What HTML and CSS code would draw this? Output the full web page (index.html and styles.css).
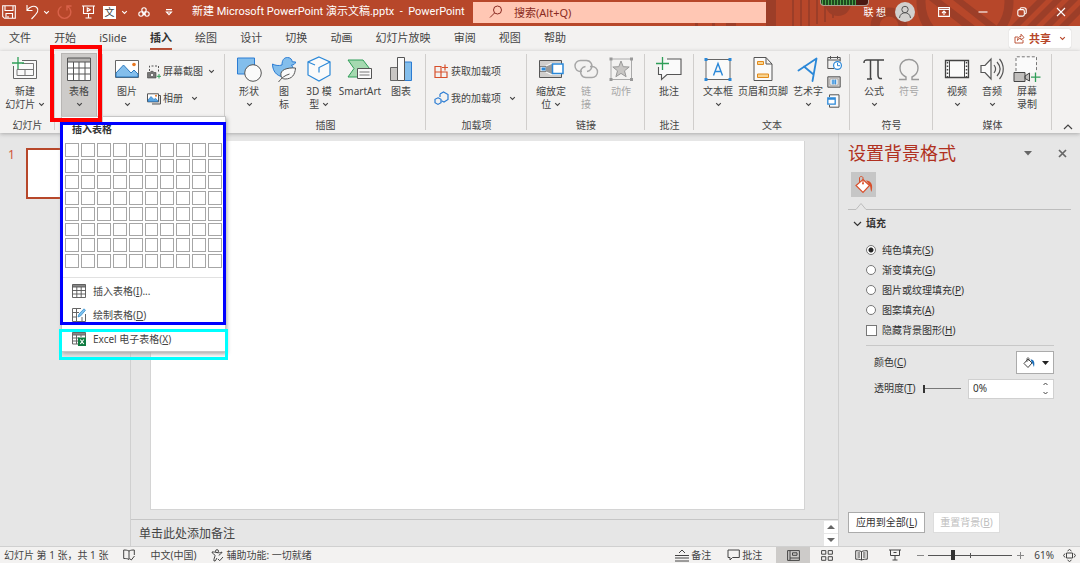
FILE: index.html
```html
<!DOCTYPE html>
<html lang="zh-CN">
<head>
<meta charset="utf-8">
<title>新建 Microsoft PowerPoint 演示文稿.pptx - PowerPoint</title>
<link rel="stylesheet" href="styles.css">
</head>
<body>
<svg class="defs" aria-hidden="true">
  <symbol id="chev" viewBox="0 0 7 5"><path d="M1.200 1.200 3.500 3.500 5.800 1.200" fill="none" stroke="currentColor" stroke-width="1.100"/></symbol>
</svg>

<header class="titlebar">
  <svg class="decor" viewBox="0 0 385 26" aria-hidden="true">
    <g fill="#9c3e28">
      <path d="M0 22h3v4H0zM17 22h3v4h-3zM31 23h10v3H31zM71 0h10v26H71zM97 0h2v26h-2zM105 0h2v26h-2zM113 0h2v26h-2zM121 0h2v24h-2zM129 0h2v22h-2zM137 0h2v18h-2z"/>
      <circle cx="143" cy="3" r="13"/>
      <path d="M234 0h12l34 26h-13zM258 0h10l34 26h-11zM316 26 342 0h9l-26 26zM332 26 358 0h9l-26 26zM348 26 374 0h9l-26 26zM364 26l21-21v9l-12 12z"/>
    </g>
    <g fill="none" stroke="#9c3e28"><circle cx="194" cy="26" r="14" stroke-width="9"/><circle cx="270" cy="2" r="44" stroke-width="9"/></g>
  </svg>
  <div class="quick">
    <button class="ic" aria-label="保存"><svg width="14" height="14" viewBox="0 0 14 14"><path d="M.7.7h12.6v12.6H2.5L.7 11.500zM3 .7v4.800h8V.7M4 13.300V8.500h6.500v4.800M6 13V11" /></svg></button>
    <button class="ic undo" aria-label="撤销"><svg width="14" height="16" viewBox="0 0 14 16"><path d="M1 1v5.500h5.500M1.300 6C4 2.500 8 1 10.800 3.500c2.500 2.500 1.200 5-5.300 11.500"/></svg></button>
    <button class="ic drop" aria-label="撤销列表"><svg width="7" height="5"><use href="#chev"/></svg></button>
    <button class="ic redo" aria-label="恢复"><svg width="16" height="15" viewBox="0 0 16 15"><path d="M10 5.500V1h4.500M4.500 1.500A6.300 6.300 0 1 0 10.500 1.500" stroke-width="1.400"/></svg></button>
    <button class="ic show" aria-label="从头开始放映"><svg width="13" height="14" viewBox="0 0 13 14"><path d="M0 1h13M1.500 1v7.500h10V1M6.500 8.500V13M3.500 13h6M5.300 3v3.500L8.300 4.800z"/></svg></button>
    <button class="ic lang" aria-label="翻译">文</button>
    <button class="ic drop" aria-label="翻译列表"><svg width="7" height="5"><use href="#chev"/></svg></button>
    <button class="ic link" aria-label="查找"><svg width="12" height="10" viewBox="0 0 12 10"><circle cx="6" cy="3" r="2.200"/><circle cx="3" cy="7" r="2.200"/><circle cx="9" cy="7" r="2.200"/><path d="M4.500 5.500 7.500 8M7.500 5.500 5 8"/></svg></button>
    <button class="ic more" aria-label="自定义快速访问工具栏"><svg width="8" height="7" viewBox="0 0 8 7"><path d="M1 .6h6M1.500 3h5L4 5.600z"/></svg></button>
  </div>
  <h1 class="doc">新建 Microsoft PowerPoint 演示文稿.pptx&nbsp; -&nbsp; PowerPoint</h1>
  <label class="search"><svg width="14" height="14" viewBox="0 0 14 14"><circle cx="8.500" cy="5" r="4"/><path d="M5.500 8 1 12.500"/></svg><input type="text" placeholder="搜索(Alt+Q)" aria-label="搜索"></label>
  <div class="meter" aria-hidden="true"></div>
  <div class="account"><span>联 想</span>
    <svg width="20" height="20" viewBox="0 0 20 20"><circle cx="10" cy="10" r="10" fill="#d2d0ce"/><circle cx="10" cy="7.500" r="3.200" fill="none" stroke="#555"/><path d="M4.500 16c.5-7 10.500-7 11 0" fill="none" stroke="#555"/></svg>
  </div>
  <div class="window">
    <button aria-label="功能区显示选项"><svg width="12" height="10" viewBox="0 0 12 10"><path d="M.6.6h10.800v8.800H.6zM.6 2.500h10.800M6 8V4.500M4 6l2-2 2 2"/></svg></button>
    <button aria-label="最小化"><svg width="10" height="10" viewBox="0 0 10 10"><path d="M.5 5h9"/></svg></button>
    <button aria-label="还原"><svg width="10" height="10" viewBox="0 0 10 10"><rect x=".8" y="2.600" width="6.500" height="6.500" rx="1.500"/><path d="M3 2.500C3 1 3.500.8 4.500.8H7c1.500 0 2.200.7 2.200 2.200v2.500c0 1-.3 1.500-1.700 1.500"/></svg></button>
    <button aria-label="关闭"><svg width="10" height="10" viewBox="0 0 10 10"><path d="m1 1 8 8M9 1 1 9"/></svg></button>
  </div>
</header>

<nav class="tabs">
  <div class="tablist">
    <a href="#">文件</a><a href="#">开始</a><a href="#">iSlide</a><a href="#" class="on">插入</a><a href="#">绘图</a><a href="#">设计</a><a href="#">切换</a><a href="#">动画</a><a href="#">幻灯片放映</a><a href="#">审阅</a><a href="#">视图</a><a href="#">帮助</a>
  </div>
  <button class="share"><svg width="11" height="11" viewBox="0 0 11 11"><path d="M4 4H1v6h8V7M3.500 7.500C3.500 4.500 5 3.500 7 3.500V1.200L10 4.500 7 7V5.300c-1.500 0-2.500.5-3.500 2.200z" fill="none" stroke="currentColor" stroke-width=".9"/></svg><b>共享</b><svg width="7" height="5"><use href="#chev"/></svg></button>
</nav>

<section class="ribbon" aria-label="插入">
  <div class="group">
    <div class="tools first"><button class="tool wide"><svg width="28" height="26" viewBox="0 0 28 26"><path d="M5 4.500h20.500v18H2.500V10" fill="#fafafa"/><path d="M2.500 10V22.500h23v-18H11" fill="none" stroke="#666"/><path d="M6 13.500h16.500M11 7.500h11.500v12H6v-6M14 13.500v6" fill="none" stroke="#777"/><path d="M7 1v12M1 7h12" stroke="#2f9e58" stroke-width="1.300"/></svg><span>新建<br>幻灯片 <svg class="cv" width="7" height="5"><use href="#chev"/></svg></span></button></div>
    <h2>幻灯片</h2>
  </div>
  <div class="group table">
    <button class="tool pressed" aria-expanded="true"><svg width="26" height="26" viewBox="0 0 26 26"><path d="M1.500 2h23v22.500h-23z" fill="#fff"/><path d="M1.500 2h23v4h-23z" fill="#b5b3b1"/><path d="M1.500 2h23v22.500h-23zM1.500 6h23M1.500 12h23M1.500 18h23M7.500 6v18.500M13 6v18.500M19 6v18.500" fill="none" stroke="#555"/></svg><span>表格<br><svg class="cv" width="7" height="5"><use href="#chev"/></svg></span></button>
    <div class="menu">
      <h3>插入表格</h3>
      <div class="cells" id="cells"></div>
      <div class="items">
        <button><svg width="14" height="14" viewBox="0 0 14 14"><path d="M.5.500h13v2.500H.5z" fill="#888"/><path d="M.5.500h13v13H.5zM.5 3h13M.5 6.500h13M.5 10h13M4.800 3v10.500M9.200 3v10.500" fill="none" stroke="#555" stroke-width=".9"/></svg><span>插入表格(<u>I</u>)...</span></button>
        <button><svg width="14" height="14" viewBox="0 0 14 14"><path d="M9 .500H.500v13h13V6M.500 4.500H7M4.500.500v13M.500 9h4M10 9v4.500" fill="none" stroke="#666"/><path d="m6 9 1-3L12 .800l1.500 1.500L8.500 8z" fill="#7cc0ee" stroke="#2b88c8" stroke-width=".7"/></svg><span>绘制表格(<u>D</u>)</span></button>
        <button><svg width="14" height="14" viewBox="0 0 14 14"><path d="M.5.500h13v2.500H.5z" fill="#888"/><path d="M.500.500h13V6M.500.500v11.500H6M.500 3h13M.500 6H7M.500 9H6M4.500 3v9M9 3v2" fill="none" stroke="#666"/><path d="M6 5.500h8V14H6z" fill="#107c41"/><path d="m8.300 7.500 3.500 4.500M11.800 7.500 8.300 12" stroke="#fff" stroke-width="1.200"/></svg><span>Excel 电子表格(<u>X</u>)</span></button>
      </div>
    </div>
  </div>
  <div class="group">
    <div class="tools">
      <button class="tool"><svg width="26" height="26" viewBox="0 0 26 26"><path d="M1.500 4.500h23v17h-23z" fill="#fff" stroke="#666"/><path d="M2 17 9.500 9l7.500 8 3-3 4 4v3H2z" fill="#83beec" stroke="#1e6fb8" stroke-width=".9"/><circle cx="20" cy="8.500" r="1.800" fill="#e8761f"/></svg><span>图片<br><svg class="cv" width="7" height="5"><use href="#chev"/></svg></span></button>
      <div class="stack">
        <button><svg width="14" height="14" viewBox="0 0 14 14"><path d="M2.500 6V1h9v7" fill="none" stroke="#555" stroke-dasharray="2 1.500"/><path d="M.5 7.500H3l1-1.200h2l1 1.200h2V13H.5z" fill="#777" stroke="#444" stroke-width=".6"/><circle cx="5" cy="10" r="1.700" fill="#eee" stroke="#444" stroke-width=".6"/><path d="M12 9v4.500M9.700 11.300h4.500" stroke="#2f9e58"/></svg><span>屏幕截图</span><svg class="cv" width="7" height="5"><use href="#chev"/></svg></button>
        <button><svg width="14" height="12" viewBox="0 0 14 12"><path d="M3 2.500h10.500v8.500H5" fill="#ddd" stroke="#555"/><path d="M.5.800h11v8H.5z" fill="#fff" stroke="#555"/><path d="m1 7 3-3.500 3 3 1.500-1.300L11 8v.5H1z" fill="#58a6e4" stroke="#1e6fb8" stroke-width=".6"/><circle cx="9" cy="2.800" r="1" fill="#e8761f"/></svg><span>相册&nbsp;</span><svg class="cv" width="7" height="5"><use href="#chev"/></svg></button>
      </div>
    </div>
    <h2>图像</h2>
  </div>
  <div class="group">
    <div class="tools">
      <button class="tool"><svg width="26" height="26" viewBox="0 0 26 26"><path d="M1.500 2h17v16h-17z" fill="#83beec" stroke="#2b7cd3"/><circle cx="17" cy="17" r="8.300" fill="#fafafa" stroke="#555"/></svg><span>形状<br><svg class="cv" width="7" height="5"><use href="#chev"/></svg></span></button>
      <button class="tool"><svg width="26" height="26" viewBox="0 0 26 26"><path d="M1.500 8c3 1.500 6 2 9.500 1 0-5 2-7.500 5.500-7.500 3 0 4.500 2 4.700 4.300l3.500.2c-.7 2.200-2 3-4.200 3 3.500 4 1 10.500-5 11.500-8 1.500-14-4-14-12.500z" fill="#83beec" stroke="#2b7cd3"/><path d="M24.500 12c-8-.5-16 1.500-14.500 8 .5 2 2 3 4 3 7 0 10-4 10.500-11z" fill="#fafafa" stroke="#555"/><path d="M7.500 26c3-4 6-6.500 11-8" fill="none" stroke="#555"/></svg><span>图<br>标</span></button>
      <button class="tool"><svg width="26" height="26" viewBox="0 0 26 26"><path d="m13 1 11 5v13L13 25 2 19V6z" fill="#fafafa" stroke="#2b88d8" stroke-width="1.200"/><path d="m2 6 7 3M24 6 13 11.500v5M13 1" fill="none" stroke="#2b88d8" stroke-width="1.200"/></svg><span>3D 模<br>型 <svg class="cv" width="7" height="5"><use href="#chev"/></svg></span></button>
      <button class="tool smart"><svg width="26" height="26" viewBox="0 0 26 26"><path d="M1 4h15l6.500 8.500L17 21H1l6-8.500z" fill="#a5d9b0" stroke="#2f9e58"/><path d="M10.500 12.500h14v10h-14z" fill="#fafafa" stroke="#555"/><path d="M12.500 16h10M12.500 19h10" stroke="#777"/></svg><span>SmartArt</span></button>
      <button class="tool"><svg width="26" height="26" viewBox="0 0 26 26"><path d="M2.500 11.500h7v13h-7z" fill="#c8c6c4" stroke="#666"/><path d="M16.500 6h7v18.500h-7z" fill="#83beec" stroke="#2b7cd3"/><path d="M9.500 1.500h7v23h-7z" fill="#fafafa" stroke="#555"/></svg><span>图表</span></button>
    </div>
    <h2>插图</h2>
  </div>
  <div class="group">
    <div class="stack lone">
      <button><svg width="15" height="15" viewBox="0 0 15 15"><path d="M1 2.500h6v5.500H1zM1 8h6v5.500H1zM7 8h6v5.500H7zM11 .500v6M8 3.500h6" fill="none" stroke="#d8502c" stroke-width="1.200"/></svg><span>获取加载项</span></button>
      <button><svg width="15" height="15" viewBox="0 0 15 15"><path d="m6 3 3.500-2L14 3.500v5L10 11 7.500 9.800M6 3v3" fill="none" stroke="#2b7cd3" stroke-width="1.200"/><path d="m4 6.800 3 1.500v3.400l-3 1.700-3-1.700V8.300z" fill="none" stroke="#2b7cd3" stroke-width="1.200"/></svg><span>我的加载项&nbsp;</span><svg class="cv" width="7" height="5"><use href="#chev"/></svg></button>
    </div>
    <h2>加载项</h2>
  </div>
  <div class="group">
    <div class="tools">
      <button class="tool"><svg width="28" height="26" viewBox="0 0 28 26"><path d="M2.500 4.500h22v17h-22z" fill="#fafafa" stroke="#555"/><path d="M3 5h21v2H14l-6 3H3zM3 16h5l6 3h10v2H3z" fill="#d0cecc"/><path d="M3 10.500h6v5H3z" fill="#fff" stroke="#666" stroke-width=".8"/><path d="M4.500 11.500h4v3h-4z" fill="#2b88d8"/><path d="m9 10.500 6-2.500v10L9 15.500z" fill="#999"/><path d="M15.500 8h10.500v9.500H15.500z" fill="#fff" stroke="#2b88d8" stroke-width="1.500"/></svg><span>缩放定<br>位 <svg class="cv" width="7" height="5"><use href="#chev"/></svg></span></button>
      <button class="tool" disabled><svg width="26" height="26" viewBox="0 0 26 26" fill="none" stroke="#a6a6a6" stroke-width="1.400"><path d="M9 15.500H7.500a5.500 5.500 0 0 1 0-11h6a5.500 5.500 0 0 1 4.500 8.500q-1 2-4 2.500"/><path d="M17 10.500h2a5.500 5.500 0 0 1 0 11h-6A5.500 5.500 0 0 1 8.500 13q1-2 4-2.500"/></svg><span>链<br>接</span></button>
      <button class="tool" disabled><svg width="26" height="26" viewBox="0 0 26 26"><path d="M3 3h20.500v20.500H3z" fill="none" stroke="#aaa"/><path d="M1.500 1.500h3v3h-3zM22 1.500h3v3h-3zM1.500 22h3v3h-3zM22 22h3v3h-3z" fill="#999"/><path d="m13 5 2.200 5.700 6 .3-4.700 3.800 1.600 5.900L13 17.400l-5.100 3.300 1.600-5.900L4.800 11l6-.3z" fill="#c8c6c4" stroke="#999"/></svg><span>动作</span></button>
    </div>
    <h2>链接</h2>
  </div>
  <div class="group">
    <div class="tools"><button class="tool"><svg width="28" height="26" viewBox="0 0 28 26"><path d="M12 3h14v15.500H12L6.500 23.500v-5H3.500V11l4-4z" fill="#fafafa"/><path d="M12 3h14v15.500H12L6.500 23.500v-5H3.500V11" fill="none" stroke="#555" stroke-width="1.100"/><path d="M7.500 1v13M1 7.500h13" stroke="#2f9e58" stroke-width="1.300"/></svg><span>批注</span></button></div>
    <h2>批注</h2>
  </div>
  <div class="group">
    <div class="tools">
      <button class="tool"><svg width="28" height="26" viewBox="0 0 28 26"><path d="M2 3.500h24v20H2z" fill="#fafafa" stroke="#666"/><path d="M.5 2h3v3h-3zM24.500 2h3v3h-3zM.5 22h3v3h-3zM24.500 22h3v3h-3z" fill="#2b88d8"/><path d="M9.500 19.500 14 7.500l4.500 12M11 15.500h6" fill="none" stroke="#2b88d8" stroke-width="1.400"/></svg><span>文本框<br><svg class="cv" width="7" height="5"><use href="#chev"/></svg></span></button>
      <button class="tool header"><svg width="20" height="26" viewBox="0 0 20 26"><path d="M1 1.500h12l6 6.500v16.500H1zM13 1.500V8h6" fill="#fafafa" stroke="#555"/><path d="M4.500 5.500h6v3h-6zM4.500 18h11v3.500h-11z" fill="#f8d491" stroke="#e28a1b"/></svg><span>页眉和页脚</span></button>
      <button class="tool"><svg width="26" height="26" viewBox="0 0 26 26"><path d="M3.500 14.500 21.500 2.500 17.500 25M9 10.500l9.500 8" fill="none" stroke="#2b88d8" stroke-width="1.800" stroke-linecap="round" stroke-linejoin="round"/></svg><span>艺术字<br><svg class="cv" width="7" height="5"><use href="#chev"/></svg></span></button>
      <div class="minis">
        <button aria-label="日期和时间"><svg width="15" height="14" viewBox="0 0 15 14"><path d="M7 12.500H.8v-11h12.400v4M.8 4h12.400M3.500 0v3M10.500 0v3" fill="none" stroke="#555"/><circle cx="10.500" cy="9.500" r="3.900" fill="#fff" stroke="#2b88d8" stroke-width="1.200"/><path d="M10.500 7v2.700H13" fill="none" stroke="#2b88d8"/></svg></button>
        <button aria-label="幻灯片编号"><svg width="15" height="12" viewBox="0 0 15 12"><path d="M.8.800h12.400v10.400H.8z" fill="#d0cecc" stroke="#555"/><path d="M3 3h8v6H3z" fill="#fff" stroke="#888" stroke-width=".6"/><path d="M6 3.500v5M8.300 3.500v5M4.500 5h5M4.500 7h5" stroke="#2b88d8"/></svg></button>
        <button aria-label="对象"><svg width="15" height="14" viewBox="0 0 15 14"><path d="M2.500 3V.800h9.500v12.400H2.500V11" fill="#fafafa" stroke="#555"/><path d="M.8 3.800h7.400v6.400H.8zM.8 5h7.400" fill="#fff" stroke="#2b88d8" stroke-width="1.300"/></svg></button>
      </div>
    </div>
    <h2>文本</h2>
  </div>
  <div class="group">
    <div class="tools">
      <button class="tool"><svg width="24" height="26" viewBox="0 0 24 26"><path d="M2 7c0-2.500.5-3 3-3h17M8.500 4v19M16 4v15c0 3 1.500 4 4 3.500M5 23h5" fill="none" stroke="#444" stroke-width="1.500"/></svg><span>公式<br><svg class="cv" width="7" height="5"><use href="#chev"/></svg></span></button>
      <button class="tool" disabled><svg width="24" height="26" viewBox="0 0 24 26"><path d="M2 23.500h7V21C5 19 3 16 3 12c0-5.500 4-8.500 9-8.500s9 3 9 8.500c0 4-2 7-6 9v2.500h7" fill="none" stroke="#999" stroke-width="1.400"/></svg><span>符号</span></button>
    </div>
    <h2>符号</h2>
  </div>
  <div class="group">
    <div class="tools">
      <button class="tool"><svg width="26" height="26" viewBox="0 0 26 26"><path d="M1.500 4.500h23v17h-23z" fill="#fafafa" stroke="#444" stroke-width="1.300"/><path d="M5.500 5v16M20.500 5v16" stroke="#444" /><path d="M3.500 6v15M22.500 6v15" stroke="#444" stroke-width="1.500" stroke-dasharray="1.500 2"/></svg><span>视频<br><svg class="cv" width="7" height="5"><use href="#chev"/></svg></span></button>
      <button class="tool"><svg width="26" height="26" viewBox="0 0 26 26" fill="none" stroke="#555" stroke-width="1.200"><path d="M2 9.500h4l6-6.500v20l-6-6.500H2z" fill="#fafafa"/><path d="M15 9c2 2.500 2 5.500 0 8M18 6c4 4.500 4 9.500 0 14M20.500 3c5 6 5 14 0 20"/></svg><span>音频<br><svg class="cv" width="7" height="5"><use href="#chev"/></svg></span></button>
      <button class="tool"><svg width="28" height="26" viewBox="0 0 28 26"><path d="M3 1h20v16H3z" fill="#fafafa"/><path d="M3 15V.800h20.500V16" fill="none" stroke="#777" stroke-dasharray="3 2"/><path d="M1 16.500h11v9H1zM12 20l4.500-3v8L12 22.500z" fill="#c0bebc" stroke="#444"/><path d="M22.500 16.500v9.500M18 21.200h9.500" stroke="#2f9e58" stroke-width="1.300"/></svg><span>屏幕<br>录制</span></button>
    </div>
    <h2>媒体</h2>
  </div>
  <button class="collapse" aria-label="折叠功能区"><svg width="10" height="6" viewBox="0 0 10 6"><path d="M1 5 5 1l4 4" fill="none" stroke="#444" stroke-width="1.200"/></svg></button>
</section>

<main class="work">
  <aside class="thumbs"><span>1</span><div class="thumb"></div></aside>
  <section class="editor">
    <div class="stage"><div class="slide"></div></div>
    <div class="notes"><span>单击此处添加备注</span>
      <div class="scroll"><button aria-label="向上"><svg width="8" height="4"><path d="M0 4h8L4 0z" fill="#666"/></svg></button><button aria-label="向下"><svg width="8" height="4"><path d="M0 0h8L4 4z" fill="#666"/></svg></button></div>
    </div>
  </section>
  <aside class="panel">
    <div class="phead"><h2>设置背景格式</h2>
      <button aria-label="任务窗格选项"><svg width="8" height="5"><path d="M0 0h8L4 4.500z" fill="#666"/></svg></button>
      <button aria-label="关闭窗格"><svg width="9" height="9" viewBox="0 0 9 9"><path d="m1 1 7 7M8 1 1 8" stroke="#666" stroke-width="1.700"/></svg></button>
    </div>
    <button class="paint" aria-label="填充"><svg width="20" height="20" viewBox="0 0 20 20"><path d="m9 4.500 6.500 6L9 17.500l-7-7z" fill="#fff" stroke="#d8502c" stroke-width="1.200"/><path d="M5.500 8V3c0-2 3.500-2 3.500 0v5" fill="none" stroke="#d8502c"/><circle cx="9" cy="8.500" r="1" fill="#d8502c"/><path d="M12 5.500c5 0 7.500 4 5.500 11.500-1.500-2-.5-5-2-7z" fill="#d8502c"/></svg></button>
    <svg class="rule" height="8" aria-hidden="true"><path d="M0 7.500h8l5-6 5 6h500" fill="none" stroke="#bdbdbd"/></svg>
    <div class="pbody">
      <button class="sec"><svg width="9" height="6" viewBox="0 0 9 6"><path d="m1 1 3.500 3.500L8 1" fill="none" stroke="#333" stroke-width="1.200"/></svg>填充</button>
      <div class="opts">
        <label><input type="radio" name="fill" checked><span>纯色填充(<u>S</u>)</span></label>
        <label><input type="radio" name="fill"><span>渐变填充(<u>G</u>)</span></label>
        <label><input type="radio" name="fill"><span>图片或纹理填充(<u>P</u>)</span></label>
        <label><input type="radio" name="fill"><span>图案填充(<u>A</u>)</span></label>
        <label><input type="checkbox"><span>隐藏背景图形(<u>H</u>)</span></label>
      </div>
      <div class="row"><span id="lc">颜色(<u>C</u>)</span>
        <button class="color" aria-labelledby="lc"><svg width="12" height="12" viewBox="0 0 12 12"><path d="m5 2 4 4-4 4.500L1 6.500z" fill="#fff" stroke="#444"/><path d="M4 5V1.500c0-1 2-1 2 0V4" fill="none" stroke="#444" stroke-width=".8"/><path d="M7.500 2.500C11 2.500 12 5 11 10c-1-1-.5-3-2-4z" fill="#1e6fb8"/></svg><svg width="7" height="4"><path d="M0 0h7L3.500 4z" fill="#222"/></svg></button></div>
      <div class="row"><label for="tr">透明度(<u>T</u>)</label>
        <input class="tslide" type="range" value="0" aria-label="透明度">
        <div class="spin"><input id="tr" type="text" value="0%"><div><button aria-label="增加"><svg width="5" height="4"><path d="m.5 3 2-2 2 2" fill="none" stroke="#444"/></svg></button><button aria-label="减少"><svg width="5" height="4"><path d="m.5 1 2 2 2-2" fill="none" stroke="#444"/></svg></button></div></div></div>
    </div>
    <div class="pfoot"><button>应用到全部(<u>L</u>)</button><button disabled>重置背景(<u>B</u>)</button></div>
  </aside>
</main>

<footer class="status">
  <div class="left">
    <span>幻灯片 第 1 张，共 1 张</span>
    <button aria-label="拼写检查"><svg width="12" height="12" viewBox="0 0 12 12"><path d="M6 2v8.500M6 2C4 1 2.500 1 .700 1v8.500C3 9.500 4.500 9.500 6 10.500M6 2c2-1 3.500-1 5.300-1v5M6.500 9.500l1.800 1.500L11.500 7"/></svg></button>
    <span>中文(中国)</span>
    <button><svg width="13" height="13" viewBox="0 0 13 13"><circle cx="6" cy="2.200" r="1.500"/><path d="M1 3c0 2 3 2 3 3.500 0 2-1.500 3-1 5.500 2 .5 2-2 3-3M11 3c0 2-3 2-3 3.500M1 3c3-.5 7 2 10 0M7 10l1.700 1.700L12 8"/></svg>辅助功能: 一切就绪</button>
  </div>
  <div class="right">
    <button><svg width="14" height="13" viewBox="0 0 14 13"><path d="M0 6.500h14M0 9h14M0 12h14M4 4l3-3 3 3"/></svg>备注</button>
    <button class="cmt"><svg width="13" height="12" viewBox="0 0 13 12"><path d="M1 1h11.300v7.500H5.500L3 11V8.500H1z"/></svg>批注</button>
    <div class="views">
      <button class="on" aria-label="普通视图"><svg width="13" height="11" viewBox="0 0 13 11"><path d="M.6.600h11.800v9.800H.6zM3 .600v9.800M3 8h9.400M5.500 2.800h4.500v2.500H5.500z"/></svg></button>
      <button aria-label="幻灯片浏览"><svg width="12" height="11" viewBox="0 0 12 11"><path d="M.6.600h4.200v3.600H.6zM7.200.600h4.200v3.600H7.200zM.6 6.700h4.200v3.600H.6zM7.200 6.700h4.200v3.600H7.200z"/></svg></button>
      <button aria-label="阅读视图"><svg width="13" height="11" viewBox="0 0 13 11"><path d="M6.500 1.500V10M6.500 1.500C4.500.700 2.500.700.700.700v8.500c2 0 4 0 5.800.8 1.800-.8 3.800-.8 5.800-.8V.700c-1.800 0-3.800 0-5.800.8M2.500 3h2.500M2.500 5h2.500M2.500 7h2.500M8 3h2.500M8 5h2.500M8 7h2.500"/></svg></button>
      <button aria-label="幻灯片放映"><svg width="12" height="12" viewBox="0 0 12 12"><path d="M0 1h12M1.500 1v5.500h9V1M6 6.500V11M3.500 11h5M4.500 3.500h3"/></svg></button>
    </div>
    <button class="zb" aria-label="缩小"><svg width="7" height="7"><path d="M0 3.500h7"/></svg></button>
    <input class="zoom" type="range" value="29" aria-label="显示比例">
    <button class="zb" aria-label="放大"><svg width="7" height="7"><path d="M0 3.500h7M3.500 0v7"/></svg></button>
    <span class="pct">61%</span>
    <button aria-label="适应窗口"><svg width="13" height="13" viewBox="0 0 13 13"><path d="M3.500 4h6v5h-6zM4.500 2l2-1.500 2 1.500M4.500 11l2 1.500 2-1.500M2 4.500.600 6.500 2 8.500M11 4.500l1.400 2-1.400 2"/></svg></button>
  </div>
</footer>

<div class="mark red"></div><div class="mark blue"></div><div class="mark cyan"></div>
<script src="grid.js"></script>
</body>
</html>
```

FILE: styles.css
```css
* { box-sizing: border-box; }
body {
  margin: 0; height: 100vh; position: relative; overflow: hidden;
  display: flex; flex-direction: column;
  font: 10px/13px "Noto Sans", "Noto Sans CJK SC", sans-serif; color: #444; background: #e6e6e6;
}
button { font: inherit; color: inherit; background: none; border: 0; padding: 0; }
input { font: inherit; color: inherit; margin: 0; }
h1, h2, h3 { margin: 0; font: inherit; }
svg { display: block; flex: none; }
u { text-underline-offset: 1px; }
.defs { position: absolute; width: 0; height: 0; }

.titlebar { position: relative; flex: none; height: 26px; display: flex; align-items: center; padding-bottom: 2px; background: #b7472a; color: #fff; }
.titlebar > * { position: relative; }
.titlebar .decor { position: absolute; right: 0; top: 0; width: 385px; height: 26px; }
.quick { width: 192px; flex: none; display: flex; align-items: center; padding-left: 2px; }
.quick svg, .window svg { fill: none; stroke: currentColor; stroke-width: 1.1; }
.quick use { stroke: none; }
.undo { margin-left: 10px; }
.drop { margin-left: 3px; }
.redo { margin-left: 7px; color: #d9624a; }
.show { margin-left: 9px; }
.lang { margin-left: 8px; width: 13px; height: 13px; background: #fff; color: #444; line-height: 12px; }
.drop + .link { margin-left: 10px; }
.lang + .drop { margin-left: 5px; }
.more { margin-left: 15px; }
.doc { width: 281px; flex: none; font-family: Roboto, "Noto Sans CJK SC", sans-serif; font-size: 11px; line-height: 16px; white-space: nowrap; }
.search { width: 293px; height: 21px; flex: none; display: flex; align-items: center; gap: 11px; padding-left: 16px; background: #ffc7b4; color: #8a2b22; }
.search svg { fill: none; stroke: currentColor; }
.search input { flex: 1; min-width: 0; border: 0; background: none; padding: 0; font-size: 11px; }
.search input::placeholder { color: #8a2b22; opacity: 1; }
.titlebar .meter { position: absolute; right: 211px; top: 0; width: 49px; height: 6px; border: 1px solid #b09a90; border-top: 0; border-radius: 0 0 4px 4px; background: linear-gradient(90deg, transparent 75%, #4a1812 75%), repeating-linear-gradient(90deg, #1c4a20 0 1px, #4aa048 1px 2px, #1c4a20 2px 3px); }
.account { margin-left: auto; display: flex; align-items: center; gap: 9px; margin-right: 9px; }
.window { display: flex; }
.window button { width: 39px; display: grid; place-items: center; }

.tabs { flex: none; display: flex; align-items: center; justify-content: space-between; height: 25px; padding: 0 9px 0 9px; background: #f3f2f1; font-size: 11px; line-height: 21px; }
.tablist { flex: none; width: 557px; display: flex; justify-content: space-between; }
.tabs a { color: inherit; text-decoration: none; border-bottom: 2px solid transparent; }
.tabs a.on { font-weight: 700; color: #333; border-color: #b7472a; }
.share { display: flex; align-items: center; gap: 4px; height: 19px; padding: 0 5px; background: #fff; color: #b7472a; border-radius: 2px; box-shadow: 0 0 1px #aaa; }
.share b { margin-right: 4px; }

.ribbon { position: relative; z-index: 2; flex: none; height: 82px; display: grid; grid-template-columns: 55px 48px 122px 201px 101px 118px 49px 156px 83px 119px 1fr; background: #f3f2f1; box-shadow: 0 1px 4px #aaa; }
.group { position: relative; display: flex; flex-direction: column; justify-content: space-between; padding: 5px 0 1px; }
.group::after { content: ""; position: absolute; right: 0; top: 3px; bottom: 3px; width: 1px; background: #d0cecc; }
.group.table { z-index: 1; }
.group h2 { text-align: center; }
.tools { display: flex; align-items: flex-start; gap: 1px; padding-left: 7px; }
.tool { width: 34px; display: flex; flex-direction: column; align-items: center; gap: 3px; white-space: nowrap; }
.tool > span { display: block; text-align: center; }
.tool .cv { display: inline-block; vertical-align: 1px; }
.tool:disabled { color: #a6a6a6; }
.wide { width: 36px; }
.smart { width: 46px; }
.header { width: 54px; }
.pressed { width: 36px; height: 64px; margin: -3px 0 0 6px; padding-top: 2px; background: #cdcbc9; border: 1px solid #b8b6b4; }
.stack { display: flex; flex-direction: column; gap: 12px; padding: 8px 0 0 2px; }
.stack button { display: flex; align-items: center; gap: 2px; height: 15px; white-space: nowrap; }
.stack .cv { margin-left: 3px; }
.lone { padding-left: 8px; }
.minis { display: flex; flex-direction: column; gap: 6px; padding-left: 1px; }
.collapse { align-self: end; justify-self: center; padding: 0 0 3px 4px; }

.menu { position: absolute; left: 6px; top: 65px; width: 165px; padding: 5px 3px 1px; background: #fff; border: 1px solid #c6c6c6; box-shadow: 1px 2px 4px #aaa; }
.menu h3 { padding-left: 7px; font-weight: 700; color: #333; line-height: 14px; }
.cells { display: grid; grid-template-columns: repeat(10, 1fr); gap: 2px; padding-top: 7px; }
.cells button { aspect-ratio: 1; border: 1px solid #a6a6a6; background: #fff; }
.items { margin: 9px -3px 0; border-top: 1px solid #e1e1e1; }
.items button { display: flex; align-items: center; gap: 7px; width: 100%; height: 24px; padding: 2px 0 0 10px; }

.work { flex: 1; min-height: 0; display: grid; grid-template-columns: 131px 1fr 242px; }
.thumbs { display: flex; align-items: flex-start; gap: 11px; padding: 15px 10px 0 8px; border-right: 1px solid #d0d0d0; color: #d0573b; font-size: 12px; }
.thumb { flex: 1; height: 51px; background: #fff; border: 2px solid #b7472a; }
.editor { display: flex; flex-direction: column; min-width: 0; }
.stage { flex: 1; display: flex; padding: 8px 33px 9px 19px; }
.slide { flex: 1; background: #fff; border: 1px solid #d4d4d4; border-top: 0; }
.notes { height: 27px; display: flex; justify-content: space-between; align-items: center; border-top: 1px solid #c6c6c6; padding-left: 8px; font-size: 12px; }
.scroll { display: flex; flex-direction: column; gap: 1px; }
.scroll button { width: 14px; height: 12px; display: grid; place-items: center; background: #fff; }
.panel { display: flex; flex-direction: column; border-left: 1px solid #d0d0d0; padding: 8px 9px 13px; color: #333; }
.phead { display: flex; align-items: center; }
.phead h2 { flex: 1; font-size: 18px; line-height: 24px; color: #b03020; }
.phead button { margin-right: 4px; }
.phead button + button { margin-left: 22px; }
.paint { align-self: flex-start; flex: none; width: 25px; height: 25px; margin: 7px 0 0 3px; display: grid; place-items: center; background: #c6c6c6; }
.rule { width: 100%; margin-top: 5px; }
.pbody { padding: 7px 17px 0 5px; }
.sec { display: flex; align-items: center; gap: 4px; font-weight: 700; }
.opts { margin-left: 13px; padding: 10px 0 5px; border-bottom: 1px solid #c8c8c8; }
.opts label { display: flex; align-items: center; gap: 6px; height: 20px; }
.opts input { appearance: none; width: 10px; height: 10px; border: 1px solid #777; border-radius: 50%; background: #fff; }
.opts input[type="checkbox"] { width: 11px; height: 11px; border-radius: 0; margin-right: -1px; }
.opts input:checked { background: radial-gradient(circle, #222 0 2px, #fff 3px); }
.row { display: flex; align-items: center; justify-content: space-between; padding-left: 21px; height: 23px; margin-top: 5px; }
.row + .row { margin-top: 3px; }
.color { display: flex; align-items: center; justify-content: flex-end; gap: 7px; width: 38px; height: 23px; padding-right: 4px; background: #fff; border: 1px solid #ababab; }
.tslide, .zoom { appearance: none; height: 10px; }
.tslide { width: 38px; background: linear-gradient(#777, #777) center / 100% 1px no-repeat; }
.tslide::-webkit-slider-thumb { appearance: none; width: 2px; height: 8px; background: #333; }
.spin { display: flex; width: 86px; height: 20px; background: #fff; border: 1px solid #d0d0d0; }
.spin input { flex: 1; min-width: 0; border: 0; background: none; padding: 0 4px; }
.spin div { display: flex; flex-direction: column; justify-content: space-around; padding-right: 5px; }
.pfoot { margin-top: auto; display: flex; gap: 8px; }
.pfoot button { width: 77px; height: 21px; background: #fff; border: 1px solid #ababab; white-space: nowrap; }
.pfoot button:disabled { width: 67px; color: #c0c0c0; border-color: #ddd; }

.status { flex: none; height: 17px; display: flex; justify-content: space-between; background: #f3f2f1; border-top: 1px solid #d0d0d0; white-space: nowrap; }
.status svg { fill: none; stroke: currentColor; }
.status > div, .status button { display: flex; align-items: center; }
.status button { gap: 2px; justify-content: center; }
.left { gap: 15px; padding-left: 4px; }
.cmt { margin-left: 16px; }
.views { display: flex; margin: 0 3px 0 14px; }
.views button { width: 34px; height: 16px; }
.views .on { background: #cdcbc9; }
.right { padding-right: 4px; }
.zb { width: 10px; color: #888; }
.zoom { width: 84px; margin: 0 3px; background: linear-gradient(#555, #555) center / 100% 1px no-repeat, linear-gradient(#555, #555) center / 1px 5px no-repeat; }
.zoom::-webkit-slider-thumb { appearance: none; width: 4px; height: 10px; background: #333; }
.pct { margin: 0 9px; }

.mark { position: absolute; z-index: 3; pointer-events: none; }
.red { left: 50px; top: 45px; width: 52px; height: 77px; border: 4px solid #f00; }
.blue { left: 60px; top: 122px; width: 166px; height: 203px; border: 3px solid #00f; }
.cyan { left: 59px; top: 329px; width: 169px; height: 31px; border: 3px solid #0ff; }
```

FILE: grid.js
```js
const cells = document.getElementById('cells');
for (let row = 1; row <= 8; row++) {
  for (let col = 1; col <= 10; col++) {
    const cell = document.createElement('button');
    cell.setAttribute('aria-label', `${col}x${row} 表格`);
    cells.append(cell);
  }
}
```
